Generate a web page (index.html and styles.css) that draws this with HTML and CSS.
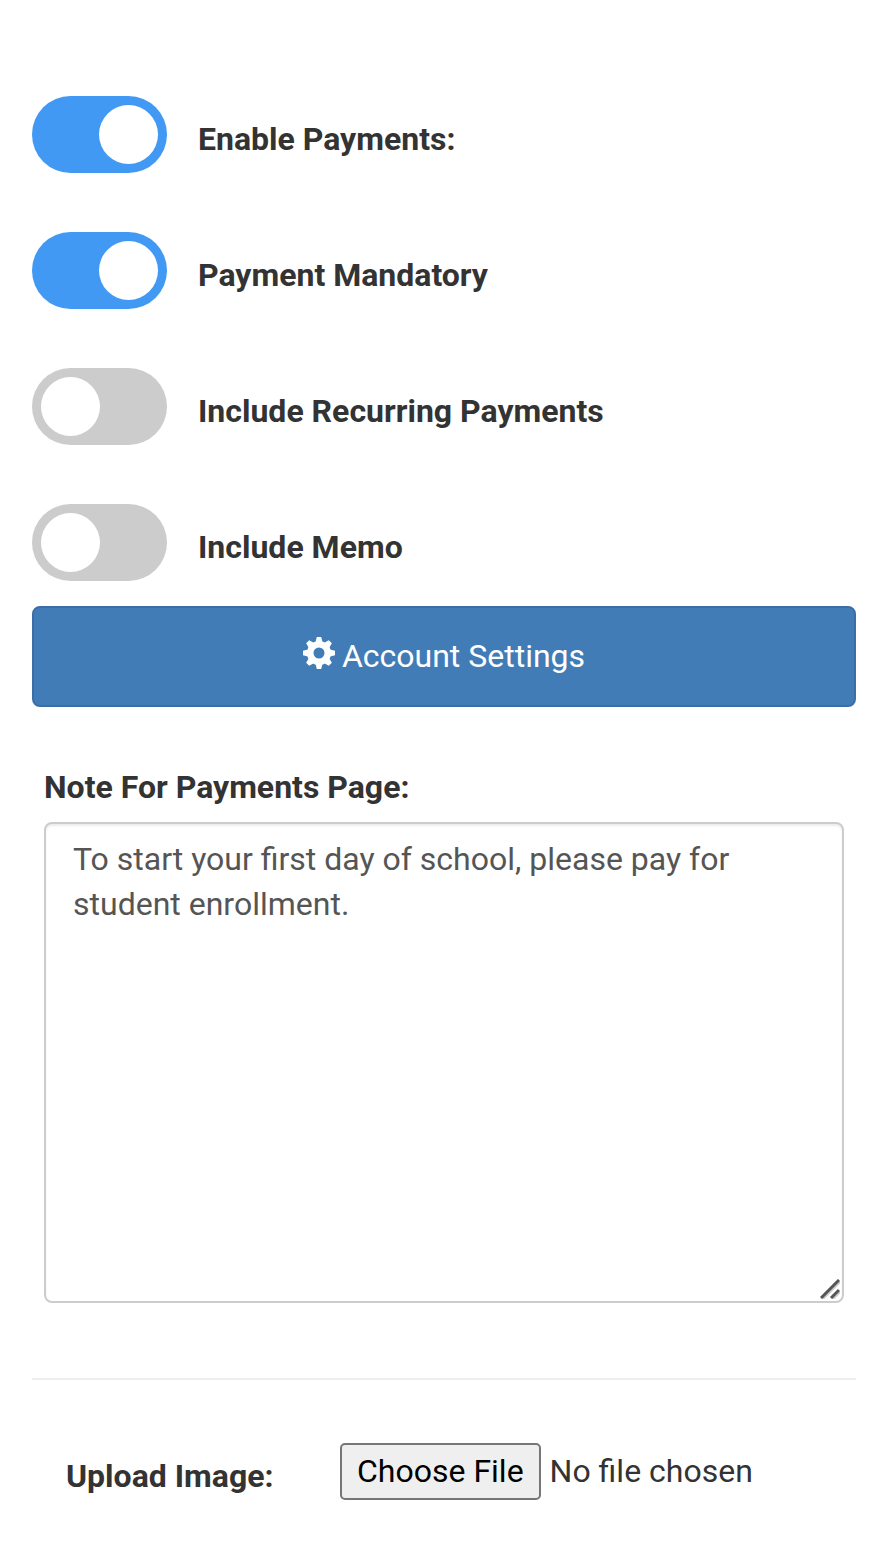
FILE: index.html
```
<!DOCTYPE html>
<html lang="en">
  <head>
    <meta charset="utf-8">
    <meta name="viewport" content="width=device-width, initial-scale=1">
    <title>Payment Settings</title>
    <link rel="stylesheet" href="styles.css">
  </head>
  <body>

    <form class="settings">

      <!-- Switches -->
      <div class="switch-list">
        <div class="switch-row">
          <input class="switch" type="checkbox" id="enablePayments" checked>
          <label class="switch-row__label" for="enablePayments">Enable Payments:</label>
        </div>
        <div class="switch-row">
          <input class="switch" type="checkbox" id="paymentMandatory" checked>
          <label class="switch-row__label" for="paymentMandatory">Payment Mandatory</label>
        </div>
        <div class="switch-row">
          <input class="switch" type="checkbox" id="recurringPayments">
          <label class="switch-row__label" for="recurringPayments">Include Recurring Payments</label>
        </div>
        <div class="switch-row">
          <input class="switch" type="checkbox" id="includeMemo">
          <label class="switch-row__label" for="includeMemo">Include Memo</label>
        </div>
      </div>

      <button class="btn-primary" type="button">
        <svg class="btn-primary__icon" viewBox="-16 -16 32 32" fill="currentColor" aria-hidden="true">
          <path fill-rule="evenodd" d="M0-12a12 12 0 1 0 0 24a12 12 0 1 0 0-24zM0-5.500a5.500 5.500 0 1 1 0 11a5.500 5.500 0 1 1 0-11z"/>
          <path id="tooth" d="M-2.200-16h4.400L3.500-11h-7zM-2.200 16h4.400L3.500 11h-7z"/>
          <use href="#tooth" transform="rotate(45)"/>
          <use href="#tooth" transform="rotate(90)"/>
          <use href="#tooth" transform="rotate(135)"/>
        </svg>
        <span>Account Settings</span>
      </button>

      <!-- Note -->
      <div class="note">
        <label class="note__label" for="note">Note For Payments Page:</label>
        <div class="note__box">
          <textarea class="note__input" id="note">To start your first day of school, please pay for student enrollment.</textarea>
          <svg class="note__grip" viewBox="0 0 20 20" aria-hidden="true">
            <path d="M3 20L20 3M13 20L20 13" stroke="#ccc" stroke-width="2"/>
            <path d="M1 19L19 1M11 19L19 11" stroke="#555" stroke-width="3"/>
          </svg>
        </div>
      </div>

      <hr class="divider">

      <!-- Image upload -->
      <div class="upload">
        <label class="upload__label" for="image">Upload Image:</label>
        <input class="upload__input" type="file" id="image">
      </div>

    </form>

  </body>
</html>
```
FILE: styles.css
```
* { box-sizing: border-box; }

body {
  margin: 0;
  background: #fff;
  color: #333;
  font: 32px/45px Roboto, sans-serif;
}

.settings { padding: 96px 24px 40px 32px; }

.switch-list {
  display: grid;
  gap: 59px;
}

.switch-row {
  display: flex;
  align-items: center;
  gap: 31px;
}

.switch-row__label {
  padding-top: 10px;
  font-weight: 700;
}

.switch {
  appearance: none;
  display: flex;
  flex: none;
  width: 135px;
  height: 77px;
  margin: 0;
  padding: 9px;
  border-radius: 39px;
  background: #ccc;
  cursor: pointer;
}

.switch::before {
  content: "";
  width: 59px;
  height: 59px;
  border-radius: 50%;
  background: #fff;
}

.switch:checked {
  justify-content: flex-end;
  background: #4299f3;
}

.btn-primary {
  display: flex;
  align-items: center;
  justify-content: center;
  gap: 7px;
  width: 100%;
  margin-top: 25px;
  padding: 26px;
  border: 2px solid #3a6ea5;
  border-radius: 8px;
  background: #427cb6;
  color: #fff;
  font: inherit;
  cursor: pointer;
}

.btn-primary__icon {
  width: 32px;
  height: 32px;
  margin-bottom: 8px;
}

.note { padding: 58px 12px 0; }

.note__label {
  display: block;
  margin-bottom: 12px;
  font-weight: 700;
}

.note__box { position: relative; }

.note__input {
  display: block;
  width: 100%;
  height: 481px;
  padding: 13px 27px;
  border: 2px solid #ccc;
  border-radius: 8px;
  box-shadow: inset 0 2px 2px rgba(0, 0, 0, .075);
  background: #fff;
  color: #555;
  font: inherit;
  resize: vertical;
}

.note__input::-webkit-resizer { background: transparent; }

/* larger grip over the corner of the box */
.note__grip {
  position: absolute;
  right: 4px;
  bottom: 4px;
  width: 20px;
  height: 20px;
  pointer-events: none;
}

.divider {
  margin: 75px 0 63px;
  border: 0;
  border-top: 2px solid #eee;
}

.upload {
  display: flex;
  align-items: center;
  padding-left: 34px;
}

.upload__label {
  flex: 0 0 274px;
  padding-top: 10px;
  font-weight: 700;
}

.upload__input {
  flex: 1;
  min-width: 0;
  color: #333;
  font: inherit;
}

.upload__input::file-selector-button {
  margin-right: 9px;
  padding: 4px 15px;
  border: 2px solid #767676;
  border-radius: 5px;
  background: #efefef;
  color: #000;
  font: inherit;
}
```
